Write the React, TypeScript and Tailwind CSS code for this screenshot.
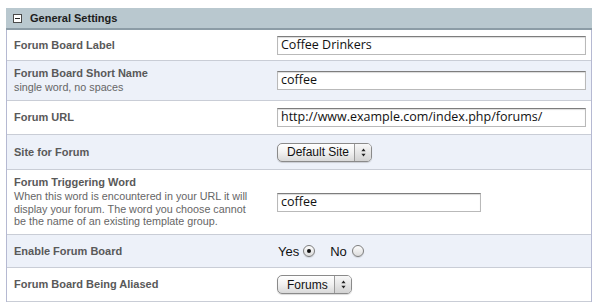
import React from "react";

const font = { fontFamily: '"Liberation Sans", Arial, sans-serif' };
const inputFont = { fontFamily: '"Open Sans", "Liberation Sans", sans-serif' };

function TextInput({ value, w }: { value: string; w: string }) {
  return (
    <div
      className={`${w} h-[19px] bg-white border border-[#b9b9b9] border-t-[#7d7d7d] shadow-[inset_0_1px_1px_rgba(0,0,0,0.15)] flex items-center pl-[3px] text-[12.5px] text-[#111] leading-none`}
      style={inputFont}
    >
      {value}
    </div>
  );
}

function Stepper() {
  return (
    <svg width="7" height="11" viewBox="0 0 7 11">
      <path d="M3.5 1.5 L5.6 4.3 L1.4 4.3 Z" fill="#222" />
      <path d="M3.5 9.5 L5.6 6.7 L1.4 6.7 Z" fill="#222" />
    </svg>
  );
}

function Select({ label, w }: { label: string; w: string }) {
  return (
    <div
      className={`${w} h-[19px] rounded-[5px] border border-[#8a8a8a] bg-gradient-to-b from-[#ffffff] via-[#f1f1f1] to-[#d9d9d9] shadow-[0_1px_1px_rgba(0,0,0,0.15)] flex items-stretch text-[12px] text-[#111] leading-none overflow-hidden`}
    >
      <div className="flex-1 flex items-center pl-[9px]">{label}</div>
      <div className="w-[17px] border-l border-[#9a9a9a] flex items-center justify-center bg-gradient-to-b from-[#f8f8f8] to-[#d2d2d2]">
        <Stepper />
      </div>
    </div>
  );
}

function Radio({ checked }: { checked?: boolean }) {
  return (
    <div className="w-[12px] h-[12px] rounded-full border border-[#7d7d7d] bg-gradient-to-b from-[#fdfdfd] to-[#dcdcdc] shadow-[0_1px_1px_rgba(0,0,0,0.12)] flex items-center justify-center">
      {checked && <div className="w-[4px] h-[4px] rounded-full bg-[#111]" />}
    </div>
  );
}

function Row({
  h,
  alt,
  label,
  desc,
  children,
}: {
  h: string;
  alt?: boolean;
  label: string;
  desc?: React.ReactNode;
  children: React.ReactNode;
}) {
  return (
    <div
      className={`grid grid-cols-[270px_1fr] ${h} ${alt ? "bg-[#edf1f9]" : "bg-white"} border-b border-[#c9cdd6]`}
    >
      <div className="flex flex-col justify-center pl-[7px]">
        <div className="text-[11px] font-bold text-[#595959] leading-[13px]">{label}</div>
        {desc && <div className="text-[10.75px] text-[#666] leading-[12.5px] mt-[1px]">{desc}</div>}
      </div>
      <div className="flex items-center">{children}</div>
    </div>
  );
}

export default function App() {
  return (
    <div className="w-[596px] h-[305px] bg-white pt-[8px] pl-[6px] pr-[4px]" style={font}>
      <div className="w-[586px]">
        <div className="h-[22px] bg-[#b9c8cf] border-b-[2px] border-[#8c9ca6] flex items-center pl-[7px] gap-[8px]">
          <div className="w-[9px] h-[9px] bg-white border border-[#4a4a4a] flex items-center justify-center">
            <div className="w-[5px] h-[1px] bg-[#222]" />
          </div>
          <div className="text-[11px] font-bold text-[#1c1c1c]">General Settings</div>
        </div>
        <div className="border-l border-r border-[#b5b9d2]">
          <Row h="h-[31px]" label="Forum Board Label">
            <TextInput value="Coffee Drinkers" w="w-[309px]" />
          </Row>
          <Row h="h-[40px]" alt label="Forum Board Short Name" desc="single word, no spaces">
            <TextInput value="coffee" w="w-[309px]" />
          </Row>
          <Row h="h-[34px]" label="Forum URL">
            <TextInput value="http://www.example.com/index.php/forums/" w="w-[309px]" />
          </Row>
          <Row h="h-[35px]" alt label="Site for Forum">
            <Select label="Default Site" w="w-[95px]" />
          </Row>
          <Row
            h="h-[65px]"
            label="Forum Triggering Word"
            desc={
              <>
                When this word is encountered in your URL it will
                <br />
                display your forum. The word you choose cannot
                <br />
                be the name of an existing template group.
              </>
            }
          >
            <TextInput value="coffee" w="w-[204px]" />
          </Row>
          <Row h="h-[33px]" alt label="Enable Forum Board">
            <div className="flex items-center text-[13px] text-[#111] leading-none">
              <span className="ml-[1px]">Yes</span>
              <span className="ml-[4px]">
                <Radio checked />
              </span>
              <span className="ml-[15px]">No</span>
              <span className="ml-[5px]">
                <Radio />
              </span>
            </div>
          </Row>
          <Row h="h-[34px]" label="Forum Board Being Aliased">
            <Select label="Forums" w="w-[75px]" />
          </Row>
        </div>
      </div>
    </div>
  );
}
